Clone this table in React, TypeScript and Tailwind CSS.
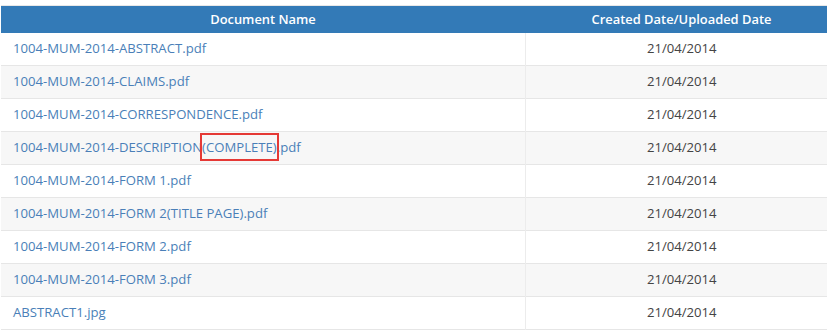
const rows = [
    '1004-MUM-2014-ABSTRACT.pdf',
    '1004-MUM-2014-CLAIMS.pdf',
    '1004-MUM-2014-CORRESPONDENCE.pdf',
    'DESC',
    '1004-MUM-2014-FORM 1.pdf',
    '1004-MUM-2014-FORM 2(TITLE PAGE).pdf',
    '1004-MUM-2014-FORM 2.pdf',
    '1004-MUM-2014-FORM 3.pdf',
    'ABSTRACT1.jpg',
];

const App = () => {
    return (
        <div className="w-[827px] h-[333px] overflow-hidden bg-white pt-[5px] pl-px" style={{ fontFamily: '"Open Sans", sans-serif' }}>
            <table className="w-[837px] border-collapse text-[13.15px] table-fixed">
                <thead>
                    <tr className="bg-[#337ab7] text-white h-[27px] border-t border-[#e8e8e8]">
                        <th className="w-[524px] font-semibold text-center text-[12.9px]">Document Name</th>
                        <th className="font-semibold text-center text-[12.9px]">Created Date/Uploaded Date</th>
                    </tr>
                </thead>
                <tbody>
                    {rows.map((name, i) => (
                        <tr key={i} className={`h-[33px] border-b border-[#e6e6e6] ${i % 2 === 1 ? 'bg-[#f7f7f7]' : 'bg-white'}`}>
                            <td className="pl-[12px] text-[#4a7fb8] border-r border-[#ececec]">
                                {name === 'DESC' ? (
                                    <span>
                                        1004-MUM-2014-DESCRIPTION
                                        <span className="outline-2 outline-[#e53935] outline-offset-0 py-[3px]">(COMPLETE)</span>
                                        .pdf
                                    </span>
                                ) : (
                                    name
                                )}
                            </td>
                            <td className="text-center text-[#444]">21/04/2014</td>
                        </tr>
                    ))}
                </tbody>
            </table>
        </div>
    );
};

export default App;
